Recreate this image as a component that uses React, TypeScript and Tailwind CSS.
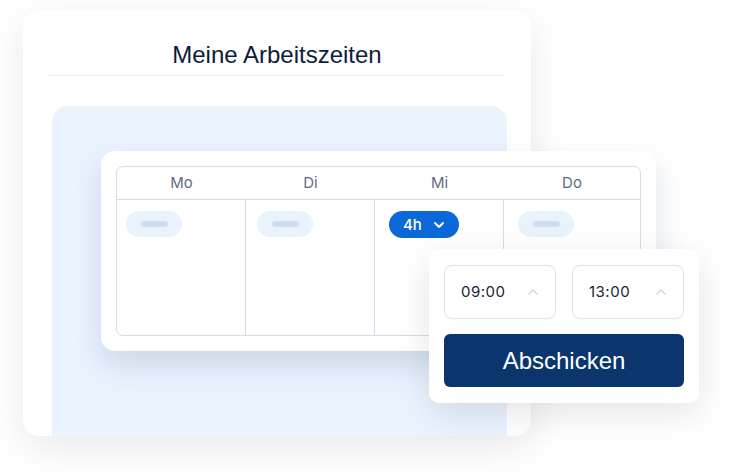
import React from "react";
import { ChevronDown, ChevronUp } from "lucide-react";

const days = ["Mo", "Di", "Mi", "Do"];
const pads = ["pl-[9px]", "pl-[11px]", "pl-[14px]", "pl-[14px]"];

function EmptyPill() {
  return (
    <div className="w-[56px] h-[26px] rounded-full bg-[#eaf2fd] flex items-center justify-center">
      <div className="w-[27px] h-[6px] rounded-full bg-[#cfdeef]" />
    </div>
  );
}

function TimeInput({ value }: { value: string }) {
  return (
    <div className="w-[112px] h-[54px] rounded-[8px] border border-[#d5e3f4] bg-white flex items-center justify-between pl-[16px] pr-[14px]">
      <span className="text-[15px] text-[#1c2333] tracking-[0.5px]">{value}</span>
      <ChevronUp size={16} strokeWidth={2} className="text-[#cdd6e2]" />
    </div>
  );
}

export default function App() {
  return (
    <div
      className="relative w-[736px] h-[473px] bg-white overflow-hidden"
      style={{ fontFamily: "Inter, 'Noto Sans', sans-serif" }}
    >
      <div className="ml-[23px] mt-[10px] w-[508px] h-[426px] rounded-[16px] bg-white shadow-[0_12px_40px_rgba(0,0,0,0.09)] flex flex-col overflow-hidden">
        <div className="h-[66px] mx-[26px] border-b border-[#e8edf4] flex items-end justify-center pb-[8px]">
          <h1 className="text-[24px] text-[#0e1b3c] leading-none font-['Liberation_Sans',Arial,sans-serif]">
            Meine Arbeitszeiten
          </h1>
        </div>
        <div className="ml-[29px] w-[455px] mt-[30px] flex-1 rounded-t-[16px] bg-[#ebf3fe]" />
      </div>

      <div className="absolute left-[101px] top-[151px] w-[555px] h-[200px] rounded-[14px] bg-white shadow-[0_14px_30px_rgba(40,70,130,0.16)] p-[15px]">
        <div className="w-full h-full rounded-[7px] border border-[#d3dcea] grid grid-cols-[129px_129px_129px_1fr] grid-rows-[33px_1fr]">
          {days.map((d) => (
            <div
              key={d}
              className="border-b border-[#d3dcea] flex items-center justify-center text-[15px] text-[#5d6c83]"
            >
              {d}
            </div>
          ))}
          {days.map((d, i) => (
            <div
              key={d + "c"}
              className={`pt-[11px] ${pads[i]} ${i < 3 ? "border-r border-[#d3dcea]" : ""}`}
            >
              {i === 2 ? (
                <div className="w-[70px] h-[27px] rounded-full bg-[#0b68d8] flex items-center gap-[9px] pl-[14px]">
                  <span className="text-[15px] font-medium text-white leading-none">4h</span>
                  <ChevronDown size={16} strokeWidth={3} className="text-white" />
                </div>
              ) : (
                <EmptyPill />
              )}
            </div>
          ))}
        </div>
      </div>

      <div className="absolute left-[429px] top-[249px] w-[270px] h-[154px] rounded-[10px] bg-white shadow-[0_10px_36px_rgba(0,0,0,0.11)] pt-[16px] px-[15px] flex flex-col gap-[15px]">
        <div className="flex gap-[16px]">
          <TimeInput value="09:00" />
          <TimeInput value="13:00" />
        </div>
        <button className="w-[240px] h-[53px] rounded-[6px] bg-[#0a356d] text-white text-[24px] font-normal flex items-center justify-center font-['Liberation_Sans',Arial,sans-serif]">
          Abschicken
        </button>
      </div>
    </div>
  );
}
